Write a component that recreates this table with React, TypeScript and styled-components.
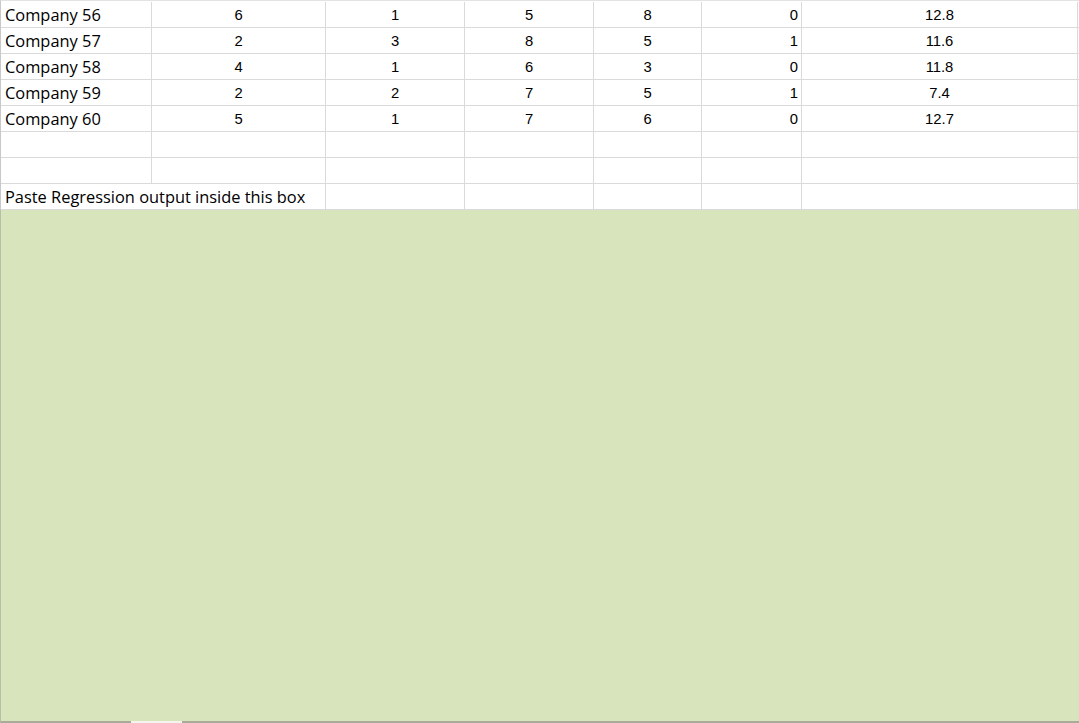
import React from "react";
import styled, { createGlobalStyle } from "styled-components";

const Global = createGlobalStyle`
  html, body { margin: 0; padding: 0; background: #ffffff; }
  body { width: 1079px; height: 723px; overflow: hidden; }
`;

const COLS = "151px 174px 139px 129px 108px 100px 276px 1fr";

const Page = styled.div`
  width: 1079px;
  height: 723px;
  display: flex;
  flex-direction: column;
  background: #ffffff;
`;

const Sheet = styled.div`
  display: grid;
  grid-template-columns: ${COLS};
  grid-auto-rows: 26px;
  border-top: 1px solid #e3e3e3;
  padding-top: 1px;
  border-left: 1px solid #c8c8c8;
`;

const Cell = styled.div<{ $align?: "left" | "center" | "right"; $span?: number; $text?: boolean }>`
  box-sizing: border-box;
  border-bottom: 1px solid #dadada;
  border-right: 1px solid #dadada;
  grid-column: span ${(p) => p.$span ?? 1};
  display: flex;
  align-items: center;
  justify-content: ${(p) =>
    p.$align === "center" ? "center" : p.$align === "right" ? "flex-end" : "flex-start"};
  padding: ${(p) => (p.$align === "right" ? "0 3px 0 0" : p.$align === "left" ? "0 0 0 4px" : "0")};
  font-family: ${(p) => (p.$text ? `"Open Sans", Lato, sans-serif` : `"Liberation Sans", Arial, sans-serif`)};
  font-size: ${(p) => (p.$text ? "16.4px" : "14.8px")};
  color: #000;
  white-space: nowrap;
  overflow: visible;
`;

const Filler = styled.div`
  box-sizing: border-box;
  border-bottom: 1px solid #dadada;
`;

const OutputBox = styled.div`
  flex: 1;
  background: #d8e4bc;
  border-left: 1px solid #b8bfa8;
  position: relative;
  border-bottom: 2px solid #a7ab98;
`;

const Gap = styled.div`
  position: absolute;
  left: 130px;
  bottom: -2px;
  width: 51px;
  height: 2px;
  background: #f4f4ee;
`;

const rows: [string, number, number, number, number, number, string][] = [
  ["Company 56", 6, 1, 5, 8, 0, "12.8"],
  ["Company 57", 2, 3, 8, 5, 1, "11.6"],
  ["Company 58", 4, 1, 6, 3, 0, "11.8"],
  ["Company 59", 2, 2, 7, 5, 1, "7.4"],
  ["Company 60", 5, 1, 7, 6, 0, "12.7"],
];

export default function App() {
  return (
    <Page>
      <Global />
      <Sheet>
        {rows.map((r) => (
          <React.Fragment key={r[0]}>
            <Cell $align="left" $text>{r[0]}</Cell>
            <Cell $align="center">{r[1]}</Cell>
            <Cell $align="center">{r[2]}</Cell>
            <Cell $align="center">{r[3]}</Cell>
            <Cell $align="center">{r[4]}</Cell>
            <Cell $align="right">{r[5]}</Cell>
            <Cell $align="center">{r[6]}</Cell>
            <Filler />
          </React.Fragment>
        ))}
        {[0, 1].map((i) => (
          <React.Fragment key={i}>
            <Cell />
            <Cell />
            <Cell />
            <Cell />
            <Cell />
            <Cell />
            <Cell />
            <Filler />
          </React.Fragment>
        ))}
        <Cell $align="left" $text $span={2}>Paste Regression output inside this box</Cell>
        <Cell />
        <Cell />
        <Cell />
        <Cell />
        <Cell />
        <Filler />
      </Sheet>
      <OutputBox>
        <Gap />
      </OutputBox>
    </Page>
  );
}
